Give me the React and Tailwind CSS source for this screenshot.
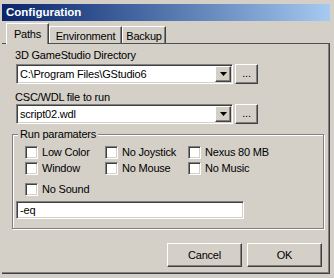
import React from 'react';

const raised =
  'border border-t-white border-l-white border-r-[#404040] border-b-[#404040] shadow-[inset_-1px_-1px_0_#808080,inset_1px_1px_0_#d4d0c8]';
const sunken =
  'border border-t-[#808080] border-l-[#808080] border-r-white border-b-white shadow-[inset_1px_1px_0_#404040,inset_-1px_-1px_0_#d4d0c8]';

function Combo({ value }) {
  return (
    <div className="flex items-center ml-[14px]">
      <div className={`w-[217px] h-[20px] bg-white flex items-center p-[1px] ${sunken}`}>
        <span className="flex-1 pl-[2px] leading-[14px]">{value}</span>
        <div className={`w-[16px] h-[16px] bg-[#d4d0c8] flex items-center justify-center ${raised}`}>
          <svg width="7" height="4" viewBox="0 0 7 4">
            <path d="M0 0h7L3.5 4z" fill="#000" />
          </svg>
        </div>
      </div>
      <button className={`ml-[2px] w-[23px] h-[20px] bg-[#d4d0c8] flex items-center justify-center leading-none pb-[2px] ${raised}`}>
        ...
      </button>
    </div>
  );
}

function Check({ label }) {
  return (
    <div className="flex items-center h-[13px]">
      <div className={`w-[13px] h-[13px] bg-white ${sunken}`} />
      <span className="ml-[4px] leading-[13px]">{label}</span>
    </div>
  );
}

function Tab({ label, active, width }) {
  if (active) {
    return (
      <div
        className={`relative z-10 h-[21px] -mb-[1px] bg-[#d4d0c8] border-t border-l border-r border-t-white border-l-white border-r-[#404040] shadow-[inset_-1px_0_0_#808080] flex justify-center pt-[2px] ${width}`}
      >
        {label}
      </div>
    );
  }
  return (
    <div
      className={`h-[17px] bg-[#d4d0c8] border-t border-l border-r border-t-white border-l-white border-r-[#404040] shadow-[inset_-1px_0_0_#808080] flex justify-center pt-[1px] ${width}`}
    >
      {label}
    </div>
  );
}

export default function App() {
  return (
    <div className="w-[334px] h-[278px] bg-[#d4d0c8] overflow-hidden text-black text-[11px] tracking-[-0.2px] font-['Liberation_Sans',Arial,sans-serif]">
      <div className="flex flex-col h-full pl-[2px] pr-[4px] pt-[4px] pb-[4px]">
        {/* title bar */}
        <div className="h-[17px] bg-gradient-to-r from-[#0a246a] to-[#a6caf0] flex items-center pl-[4px]">
          <span className="text-white font-bold text-[11.5px] tracking-normal">Configuration</span>
        </div>

        {/* tabs */}
        <div className="flex items-end pl-[4px] mt-[2px]">
          <Tab label="Paths" active width="w-[43px]" />
          <Tab label="Environment" width="w-[73px]" />
          <Tab label="Backup" width="w-[44px]" />
        </div>

        {/* tab page */}
        <div className="flex-1 flex flex-col border-t border-r border-b border-t-[#505050] border-r-[#404040] border-b-[#404040] shadow-[inset_-1px_-1px_0_#808080]">
          <div className="ml-[13px] mt-[5px] leading-[13px]">3D GameStudio Directory</div>
          <div className="mt-[2px]">
            <Combo value="C:\Program Files\GStudio6" />
          </div>
          <div className="ml-[13px] mt-[7px] leading-[13px]">CSC/WDL file to run</div>
          <div>
            <Combo value="script02.wdl" />
          </div>

          <fieldset className="ml-[10px] mt-[4px] w-[312px] border border-[#808080] shadow-[inset_1px_1px_0_white,1px_1px_0_white] pb-[9px]">
            <legend className="ml-[5px] px-[2px] leading-[13px] bg-[#d4d0c8]">Run paramaters</legend>
            <div className="grid grid-cols-[80px_83px_1fr] gap-y-[3px] pl-[12px] mt-[5px]">
              <Check label="Low Color" />
              <Check label="No Joystick" />
              <Check label="Nexus 80 MB" />
              <Check label="Window" />
              <Check label="No Mouse" />
              <Check label="No Music" />
            </div>
            <div className="pl-[12px] mt-[8px]">
              <Check label="No Sound" />
            </div>
            <div className={`ml-[3px] mt-[5px] w-[228px] h-[18px] bg-white flex items-center pl-[3px] ${sunken}`}>
              -eq
            </div>
          </fieldset>

          <div className="flex justify-end gap-[5px] mt-[14px] pr-[7px]">
            <button className={`w-[75px] h-[24px] bg-[#d4d0c8] ${raised}`}>Cancel</button>
            <button className={`w-[75px] h-[24px] bg-[#d4d0c8] ${raised}`}>OK</button>
          </div>
        </div>
      </div>
    </div>
  );
}
